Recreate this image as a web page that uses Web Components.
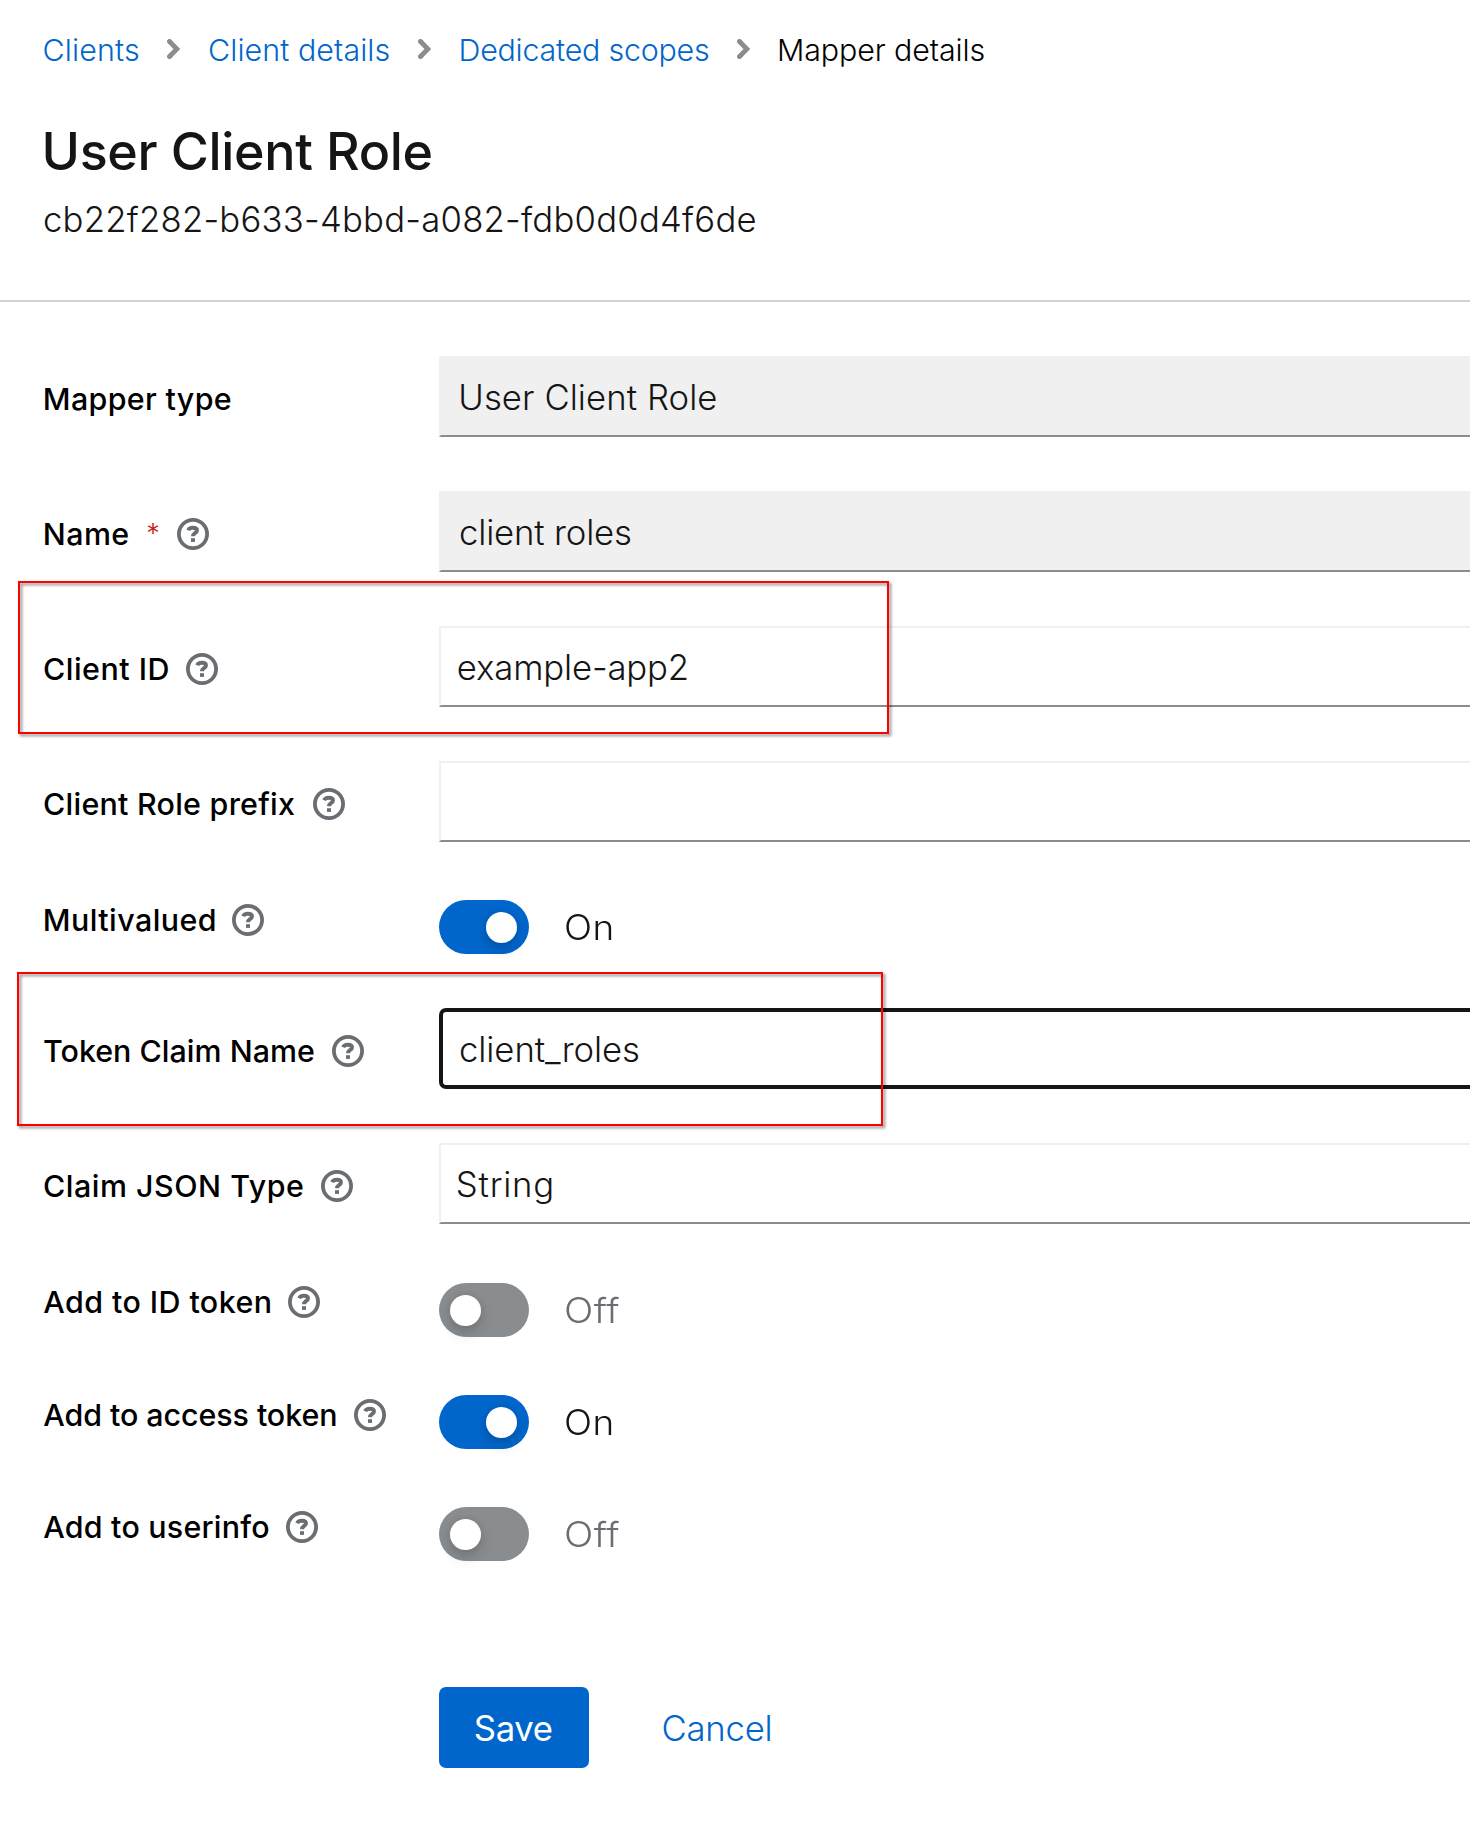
<!DOCTYPE html>
<html lang="en">
<head>
<meta charset="utf-8">
<title>Mapper details</title>
<style>
  html, body { margin: 0; background: #fff; }
  body { width: 1470px; height: 1826px; overflow: hidden; position: relative;
    font-family: Inter, "Liberation Sans", sans-serif; font-weight: 300; font-size: 34.7px; color: #151515; }
</style>
</head>
<body>
<mapper-page></mapper-page>
<script>
const ctx = document.createElement('canvas').getContext('2d');

function define(name, html, connected) {
  const template = document.createElement('template');
  template.innerHTML = html;
  customElements.define(name, class extends HTMLElement {
    constructor() {
      super();
      this.attachShadow({ mode: 'open' }).append(template.content.cloneNode(true));
    }
    connectedCallback() { if (connected) connected.call(this, this.shadowRoot); }
  });
}

/* A single line fitted to an exact visible width: by tracking, or by
   stretching the glyphs when the "stretch" attribute is set. */
define('fit-text', `
  <style>
    :host { display: block; flex: none; white-space: nowrap; line-height: 54px; }
    span { display: block; font-kerning: normal; transform-origin: 0 50%; }
  </style>
  <span><slot></slot></span>`, function (root) {
  const style = getComputedStyle(this);
  const text = this.textContent;
  const width = Number(this.getAttribute('width'));
  ctx.font = style.fontWeight + ' ' + style.fontSize + ' ' + style.fontFamily;
  const m = ctx.measureText(text);
  const ink = m.actualBoundingBoxRight + m.actualBoundingBoxLeft;
  const gaps = Math.max(1, text.length - 1);
  const span = root.querySelector('span');
  this.style.width = width + 'px';
  if (this.hasAttribute('stretch')) {
    const spacing = 0.4;
    const scale = width / (ink + spacing * gaps);
    span.style.letterSpacing = spacing + 'px';
    span.style.transform = 'scaleX(' + scale.toFixed(4) + ')';
    span.style.marginLeft = (m.actualBoundingBoxLeft * scale).toFixed(2) + 'px';
    return;
  }
  span.style.letterSpacing = (text.length > 1 ? (width - ink) / gaps : 0).toFixed(3) + 'px';
  span.style.marginLeft = m.actualBoundingBoxLeft.toFixed(2) + 'px';
});

define('help-icon', `
  <style>:host { display: block; flex: none; width: 32px; height: 32px; } svg { display: block; }</style>
  <svg width="32" height="32" viewBox="0 0 32 32" fill="none" stroke="#6a6e73">
    <circle cx="16" cy="16" r="14.1" stroke-width="3.8"/>
    <path d="M11.2 12.3C12 10.3 13.8 9.8 15.9 9.8C18.6 9.8 20 10.8 20 12.4C20 15.1 16 14.7 16 18.3" stroke-width="3.9"/>
    <path d="M14 20.2h4v3.7h-4z" fill="#6a6e73" stroke="none"/>
  </svg>`);

define('crumb-chevron', `
  <style>:host { display: block; flex: none; width: 13px; height: 20px; } svg { display: block; }</style>
  <svg width="13" height="20" viewBox="0 0 13 20" fill="none" stroke="#8a8d90">
    <path d="M2.2 2.2l7.6 7.8L2.2 17.8" stroke-width="4.8"/>
    <path d="M2.4 2.4l1 1M2.4 17.6l1-1" stroke-width="4.8" stroke-linecap="round"/>
  </svg>`);

define('crumb-trail', `
  <style>
    :host { display: flex; align-items: center; height: 54px; padding: 23px 0 0 43.5px; margin-bottom: -1px; font-size: 30.4px; }
    fit-text { color: #06c; }
    fit-text.current { color: #000; }
    crumb-chevron { margin: 0 29px 2px 28px; }
  </style>
  <fit-text width="95.5">Clients</fit-text><crumb-chevron></crumb-chevron>
  <fit-text width="180.5">Client details</fit-text><crumb-chevron></crumb-chevron>
  <fit-text width="248.5" style="margin-left:1px">Dedicated scopes</fit-text><crumb-chevron></crumb-chevron>
  <fit-text width="205.5" class="current">Mapper details</fit-text>`);

define('page-heading', `
  <style>
    :host { display: block; box-sizing: border-box; height: 226px; padding: 41px 0 0 44px; border-bottom: 2px solid #d2d2d2; }
    .title { font-size: 52px; font-weight: 450; line-height: 70px; margin-left: 1.5px; }
    .sub { margin-top: 4.5px; }
  </style>
  <fit-text class="title" width="386">User Client Role</fit-text>
  <fit-text class="sub" width="711.5">cb22f282-b633-4bbd-a082-fdb0d0d4f6de</fit-text>`);

define('form-row', `
  <style>
    :host { display: grid; grid-template-columns: 395px 1fr; height: 81px; }
    :host([compact]) { height: 58px; }
    .label { display: flex; align-items: center; height: 54px; padding-top: 16px; font-size: 30.4px; font-weight: 500; color: #000; }
    :host([compact]) .label { padding-top: 0; height: 48px; }
    :host([lower]) .label { padding-top: 1px; }
    .req { color: #c9190b; font-size: 27px; font-weight: 300; margin-left: 19px; margin-right: 1px; }
    help-icon { margin-left: 17.6px; margin-bottom: 1px; }
  </style>
  <div class="label"></div>
  <slot></slot>`, function (root) {
  const label = root.querySelector('.label');
  const fit = document.createElement('fit-text');
  fit.setAttribute('width', this.getAttribute('label-width'));
  fit.textContent = this.getAttribute('label');
  fit.style.marginLeft = (this.getAttribute('nudge') || 0) + 'px';
  label.append(fit);
  if (this.hasAttribute('required')) {
    const star = document.createElement('fit-text');
    star.className = 'req';
    star.setAttribute('width', '11');
    star.textContent = '*';
    label.append(star);
  }
  if (!this.hasAttribute('no-help')) label.append(document.createElement('help-icon'));
});

define('text-field', `
  <style>
    :host { display: flex; align-items: center; box-sizing: border-box; height: 81px; padding: 0 0 0 19px;
      border: 2px solid #f0f0f0; border-bottom-color: #8a8d90; border-right: 0; }
    :host([disabled]) { background: #f0f0f0; }
    :host([select]) { padding-left: 16.8px; }
    :host([focused]) { border: 4px solid #151515; border-right: 0; border-radius: 7px 0 0 7px; padding-left: 17px; }
  </style>
  <slot></slot>`);

define('toggle-switch', `
  <style>
    :host { display: flex; align-items: center; height: 54px; padding-top: 4px; color: #6a6e73; }
    :host([low]) { padding-top: 5px; }
    :host([on]) { color: #151515; }
    .track { display: flex; box-sizing: border-box; width: 90px; height: 54px; padding: 11.5px 11px; border-radius: 27px; background: #8a8d90; }
    :host([on]) .track { background: #06c; justify-content: flex-end; padding-right: 12px; }
    .knob { width: 31px; height: 31px; border-radius: 50%; background: #fff; box-shadow: 0 7px 14px rgba(3,3,3,.16), 0 0 7px rgba(3,3,3,.08); }
    .text { margin-left: 37.5px; }
  </style>
  <div class="track"><div class="knob"></div></div>
  <div class="text"><slot></slot></div>`);

define('form-actions', `
  <style>
    :host { display: flex; align-items: center; margin: 73px 0 0 395px; gap: 74.5px; }
    .save { display: flex; align-items: center; justify-content: center; box-sizing: border-box; width: 150px; height: 81px;
      padding-right: 1.5px; background: #06c; color: #fff; border-radius: 7px; font-weight: 400; }
    .cancel { color: #06c; }
  </style>
  <div class="save"><fit-text width="77">Save</fit-text></div>
  <div class="cancel"><fit-text width="107">Cancel</fit-text></div>`);

/* Red annotation frame lying over the form. */
define('red-frame', `
  <style>:host { position: absolute; box-sizing: border-box; border: 2px solid #f00; filter: drop-shadow(2.5px 2.5px 1.5px rgba(0,0,0,.5)); }</style>`);

define('mapper-page', `
  <style>
    :host { display: block; }
    form { display: flex; flex-direction: column; gap: 54px; margin: 0; padding: 54px 0 0 44px; }
    .first { left: 18px; top: 581px; width: 871px; height: 153px; }
    .second { left: 17px; top: 972px; width: 866px; height: 154px; }
  </style>
  <crumb-trail></crumb-trail>
  <page-heading></page-heading>
  <form>
    <form-row label="Mapper type" label-width="186" nudge="0.8" no-help><text-field disabled><fit-text width="255" style="margin-left:1.3px">User Client Role</fit-text></text-field></form-row>
    <form-row label="Name" label-width="83.5" nudge="0.8" required><text-field disabled><fit-text width="170">client roles</fit-text></text-field></form-row>
    <form-row label="Client ID" label-width="124.5"><text-field select><fit-text width="229">example-app2</fit-text></text-field></form-row>
    <form-row label="Client Role prefix" label-width="251"><text-field></text-field></form-row>
    <form-row label="Multivalued" label-width="170" nudge="0.8" compact><toggle-switch on><fit-text width="45.5" stretch>On</fit-text></toggle-switch></form-row>
    <form-row label="Token Claim Name" label-width="270"><text-field focused><fit-text width="178">client_roles</fit-text></text-field></form-row>
    <form-row label="Claim JSON Type" label-width="259"><text-field select><fit-text width="93.5">String</fit-text></text-field></form-row>
    <form-row label="Add to ID token" label-width="227.5" nudge="-0.8" compact><toggle-switch low><fit-text width="53.5" stretch>Off</fit-text></toggle-switch></form-row>
    <form-row label="Add to access token" label-width="293" nudge="-0.8" compact lower><toggle-switch low on><fit-text width="45.5" stretch>On</fit-text></toggle-switch></form-row>
    <form-row label="Add to userinfo" label-width="225" nudge="-0.8" compact lower><toggle-switch low><fit-text width="53.5" stretch>Off</fit-text></toggle-switch></form-row>
    <form-actions></form-actions>
  </form>
  <red-frame class="first"></red-frame>
  <red-frame class="second"></red-frame>`);
</script>
</body>
</html>
